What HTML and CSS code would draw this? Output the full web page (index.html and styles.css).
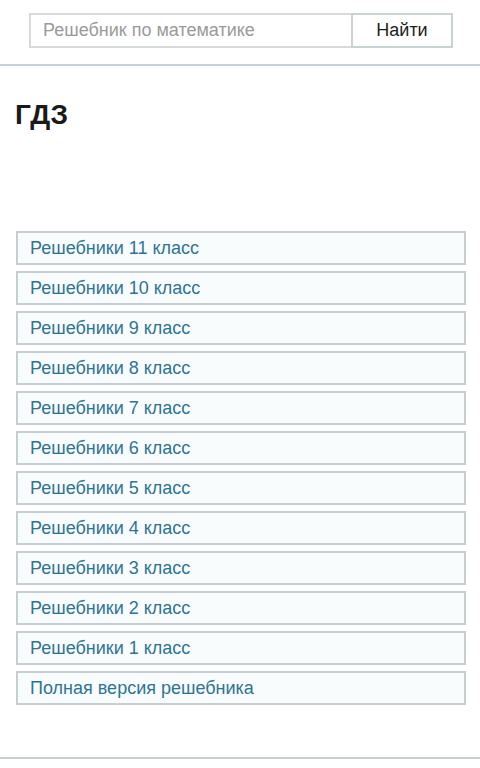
FILE: index.html
```html
<!DOCTYPE html>
<html lang="ru">
<head>
    <meta charset="UTF-8">
    <meta name="viewport" content="width=device-width, initial-scale=1.0">
    <title>ГДЗ</title>
    <link rel="stylesheet" href="styles.css">
</head>
<body>
    <header>
        <form class="search-form">
            <input type="text" class="search-input" placeholder="Решебник по математике">
            <button type="submit" class="search-button">Найти</button>
        </form>
    </header>

    <div class="content">
        <h1>ГДЗ</h1>

        <ul class="class-list">
            <li><a href="#">Решебники 11 класс</a></li>
            <li><a href="#">Решебники 10 класс</a></li>
            <li><a href="#">Решебники 9 класс</a></li>
            <li><a href="#">Решебники 8 класс</a></li>
            <li><a href="#">Решебники 7 класс</a></li>
            <li><a href="#">Решебники 6 класс</a></li>
            <li><a href="#">Решебники 5 класс</a></li>
            <li><a href="#">Решебники 4 класс</a></li>
            <li><a href="#">Решебники 3 класс</a></li>
            <li><a href="#">Решебники 2 класс</a></li>
            <li><a href="#">Решебники 1 класс</a></li>
            <li><a href="#">Полная версия решебника</a></li>
        </ul>
    </div>

    <footer></footer>
</body>
</html>
```

FILE: styles.css
```css
body {
    font-family: 'Liberation Sans', Arial, sans-serif;
    background-color: #fff;
    color: #222;
    margin: 0;
    padding: 0;
}

header {
    padding: 13px 0 16px;
    border-bottom: 2px solid #c3d2d9;
}

.search-form {
    display: flex;
    margin-left: 29px;
    width: 424px;
    height: 35px;
}

.search-input {
    flex: 1;
    box-sizing: border-box;
    height: 35px;
    margin: 0;
    padding: 0 12px;
    border: 2px solid #d6dadb;
    border-right: none;
    font-family: inherit;
    font-size: 18px;
    color: #333;
    background-color: #fff;
    outline: none;
}

.search-input::placeholder {
    color: #9a9a9a;
}

.search-button {
    box-sizing: border-box;
    width: 102px;
    height: 35px;
    margin: 0;
    border: 2px solid #c9d2d4;
    background-color: #fff;
    font-family: inherit;
    font-size: 18px;
    color: #1e1e1e;
    cursor: pointer;
}

.content {
    padding: 0 14px 0 16px;
}

h1 {
    margin: 33px 0 0 -1px;
    font-size: 28px;
    line-height: 32px;
    font-weight: bold;
    color: #1a1a1a;
}

.class-list {
    list-style: none;
    margin: 100px 0 0;
    padding: 0;
}

.class-list li {
    margin-bottom: 6px;
}

.class-list a {
    display: block;
    box-sizing: border-box;
    height: 34px;
    padding: 0 12px;
    line-height: 31px;
    border: 2px solid #c6ced1;
    background-color: #f9fcfd;
    color: #2d7494;
    font-size: 18px;
    text-decoration: none;
}

.class-list a:hover {
    text-decoration: underline;
}

footer {
    margin-top: 52px;
    border-top: 2px solid #c6ced1;
    height: 20px;
}
```
